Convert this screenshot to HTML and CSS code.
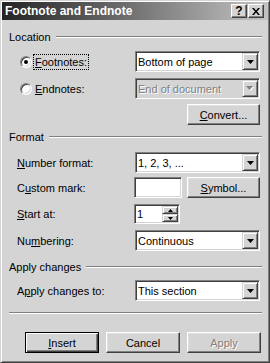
FILE: index.html
```html
<!DOCTYPE html>
<html lang="en">
<head>
    <meta charset="UTF-8">
    <title>Footnote and Endnote</title>
    <link rel="stylesheet" href="styles.css">
</head>
<body>
    <div class="dialog">
        <div class="titlebar">
            <span class="title">Footnote and Endnote</span>
            <div class="caption-btns">
                <span class="cap-btn cap-help">?</span>
                <span class="cap-btn">
                    <svg width="8" height="7" viewBox="0 0 8 7"><path d="M0 0h2l2 2.5L6 0h2L5 3.5 8 7H6L4 4.5 2 7H0l3-3.5z" fill="#000"/></svg>
                </span>
            </div>
        </div>

        <div class="content">
            <!-- Location -->
            <div class="group-head head-location"><span>Location</span><i class="etch"></i></div>

            <div class="row radio-row row-footnotes">
                <span class="radio checked"></span>
                <span class="radio-label focus"><u>F</u>ootnotes:</span>
                <div class="combo">
                    <span class="combo-text">Bottom of page</span>
                    <span class="drop-btn"><svg width="7" height="4" viewBox="0 0 7 4"><path d="M0 0h7L3.5 4z" fill="#000"/></svg></span>
                </div>
            </div>

            <div class="row radio-row row-endnotes">
                <span class="radio"></span>
                <span class="radio-label"><u>E</u>ndnotes:</span>
                <div class="combo disabled">
                    <span class="combo-text">End of document</span>
                    <span class="drop-btn"><svg width="8" height="5" viewBox="0 0 8 5"><path d="M1 1h7L4.5 5z" fill="#fff"/><path d="M0 0h7L3.5 4z" fill="#808080"/></svg></span>
                </div>
            </div>

            <div class="row row-convert">
                <span class="btn btn-wide"><span><u>C</u>onvert...</span></span>
            </div>

            <!-- Format -->
            <div class="group-head head-format"><span>Format</span><i class="etch"></i></div>

            <div class="row row-number">
                <span class="row-label"><u>N</u>umber format:</span>
                <div class="combo">
                    <span class="combo-text">1, 2, 3, ...</span>
                    <span class="drop-btn"><svg width="7" height="4" viewBox="0 0 7 4"><path d="M0 0h7L3.5 4z" fill="#000"/></svg></span>
                </div>
            </div>

            <div class="row row-custom">
                <span class="row-label">C<u>u</u>stom mark:</span>
                <span class="field mark-box"></span>
                <span class="btn btn-wide btn-symbol"><span><u>S</u>ymbol...</span></span>
            </div>

            <div class="row row-start">
                <span class="row-label"><u>S</u>tart at:</span>
                <div class="field spin">
                    <span class="combo-text">1</span>
                    <span class="spin-btns">
                        <span class="spin-btn"><svg width="5" height="3" viewBox="0 0 5 3"><path d="M0 3h5L2.5 0z" fill="#000"/></svg></span>
                        <span class="spin-btn"><svg width="5" height="3" viewBox="0 0 5 3"><path d="M0 0h5L2.5 3z" fill="#000"/></svg></span>
                    </span>
                </div>
            </div>

            <div class="row row-numbering">
                <span class="row-label">Nu<u>m</u>bering:</span>
                <div class="combo">
                    <span class="combo-text">Continuous</span>
                    <span class="drop-btn"><svg width="7" height="4" viewBox="0 0 7 4"><path d="M0 0h7L3.5 4z" fill="#000"/></svg></span>
                </div>
            </div>

            <!-- Apply changes -->
            <div class="group-head head-apply"><span>Apply changes</span><i class="etch"></i></div>

            <div class="row row-apply">
                <span class="row-label">A<u>p</u>ply changes to:</span>
                <div class="combo">
                    <span class="combo-text">This section</span>
                    <span class="drop-btn"><svg width="7" height="4" viewBox="0 0 7 4"><path d="M0 0h7L3.5 4z" fill="#000"/></svg></span>
                </div>
            </div>

            <div class="divider"></div>

            <div class="actions">
                <span class="btn btn-default"><span><u>I</u>nsert</span></span>
                <span class="btn">Cancel</span>
                <span class="btn btn-disabled">Apply</span>
            </div>
        </div>
    </div>
</body>
</html>
```

FILE: styles.css
```css
body {
    margin: 0;
    font-family: "Liberation Sans", Arial, sans-serif;
    font-size: 11px;
    color: #000;
    background: #d4d4d4;
}
.dialog {
    box-sizing: border-box;
    width: 270px;
    height: 363px;
    padding: 1px;
    background: #d4d4d4;
    border: 1px solid;
    border-color: #d4d4d4 #404040 #404040 #d4d4d4;
    box-shadow: inset 1px 1px #fff, inset -1px -1px #808080;
}

/* title bar */
.titlebar {
    display: flex;
    align-items: center;
    height: 18px;
    padding: 0 4px 0 3px;
    background: linear-gradient(to right, #242424, #c4c4c4);
}
.title {
    flex: 1;
    color: #fff;
    font-weight: bold;
    font-size: 12px;
}
.caption-btns {
    display: flex;
    gap: 1px;
}
.cap-btn {
    box-sizing: border-box;
    display: flex;
    align-items: center;
    justify-content: center;
    width: 16px;
    height: 14px;
    background: #d4d4d4;
    border: 1px solid;
    border-color: #fff #404040 #404040 #fff;
    box-shadow: inset -1px -1px #808080;
}
.cap-help {
    font-weight: bold;
    font-size: 12px;
    line-height: 12px;
}

/* content */
.content {
    padding: 0 6px 0 7px;
}
.group-head {
    display: flex;
    align-items: center;
    height: 14px;
}
.etch {
    flex: 1;
    height: 0;
    margin-left: 5px;
    border-top: 1px solid #808080;
    border-bottom: 1px solid #fff;
}
.head-location { margin-top: 10px; }
.head-format { margin-top: 5px; }
.head-apply { margin-top: 9px; }

.row {
    display: flex;
    align-items: center;
    height: 21px;
    padding: 0 2px 0 8px;
}
.radio-row { padding-left: 11px; }
.row-footnotes { margin-top: 7px; }
.row-endnotes { margin-top: 6px; }
.row-convert { margin-top: 5px; justify-content: flex-end; }
.row-number { margin-top: 8px; }
.row-custom { margin-top: 4px; }
.row-start { margin-top: 6px; height: 20px; }
.row-numbering { margin-top: 6px; }
.row-apply { margin-top: 6px; }

.row-label {
    width: 118px;
    flex: none;
}
.row-custom .row-label,
.row-start .row-label { width: 117px; }

/* radio buttons */
.radio {
    box-sizing: border-box;
    position: relative;
    width: 12px;
    height: 12px;
    flex: none;
    border-radius: 50%;
    background: #fff;
    border: 1px solid;
    border-color: #808080 #fff #fff #808080;
    box-shadow: inset 1px 1px #404040, inset -1px -1px #d4d4d4;
}
.radio.checked::after {
    content: "";
    position: absolute;
    left: 3px;
    top: 3px;
    width: 4px;
    height: 4px;
    border-radius: 50%;
    background: #000;
}
.radio-label {
    flex: 1;
    margin-left: 1px;
    padding: 1px;
    border: 1px solid transparent;
}
.radio-label.focus {
    flex: none;
    margin-right: auto;
    border: 1px dotted #000;
}

/* sunken fields */
.field, .combo {
    box-sizing: border-box;
    background: #fff;
    border: 1px solid;
    border-color: #808080 #fff #fff #808080;
    box-shadow: inset 1px 1px #404040, inset -1px -1px #d4d4d4;
}
.combo {
    display: flex;
    align-items: center;
    width: 125px;
    height: 21px;
    flex: none;
}
.combo-text {
    flex: 1;
    padding-left: 2px;
    white-space: nowrap;
}
.combo.disabled {
    background: #d4d4d4;
}
.combo.disabled .combo-text {
    color: #808080;
    text-shadow: 1px 1px #fff;
}
.drop-btn {
    box-sizing: border-box;
    display: flex;
    align-items: center;
    justify-content: center;
    align-self: stretch;
    width: 16px;
    margin: 1px;
    background: #d4d4d4;
    border: 1px solid;
    border-color: #d4d4d4 #404040 #404040 #d4d4d4;
    box-shadow: inset 1px 1px #fff, inset -1px -1px #808080;
}
.mark-box {
    width: 48px;
    height: 21px;
    flex: none;
}
.spin {
    display: flex;
    align-items: center;
    width: 46px;
    height: 20px;
}
.spin-btns {
    display: flex;
    flex-direction: column;
    align-self: stretch;
    width: 16px;
    margin: 1px;
}
.spin-btn {
    box-sizing: border-box;
    flex: 1;
    display: flex;
    align-items: center;
    justify-content: center;
    background: #d4d4d4;
    border: 1px solid;
    border-color: #d4d4d4 #404040 #404040 #d4d4d4;
    box-shadow: inset 1px 1px #fff, inset -1px -1px #808080;
}

/* push buttons */
.btn {
    box-sizing: border-box;
    display: flex;
    align-items: center;
    justify-content: center;
    width: 74px;
    height: 21px;
    flex: none;
    background: #d4d4d4;
    border: 1px solid;
    border-color: #fff #404040 #404040 #fff;
    box-shadow: inset -1px -1px #808080, inset 1px 1px #dfdfdf;
}
.btn-wide { width: 73px; }
.btn-symbol { margin-left: 5px; }
.btn-default {
    border-color: #000;
    box-shadow: inset 1px 1px #fff, inset -1px -1px #404040, inset -2px -2px #808080;
}
.btn-disabled {
    color: #808080;
    text-shadow: 1px 1px #fff;
}

.divider {
    margin-top: 11px;
    border-top: 1px solid #808080;
    border-bottom: 1px solid #fff;
}
.actions {
    display: flex;
    gap: 7px;
    margin-top: 18px;
    padding-left: 16px;
}
```
